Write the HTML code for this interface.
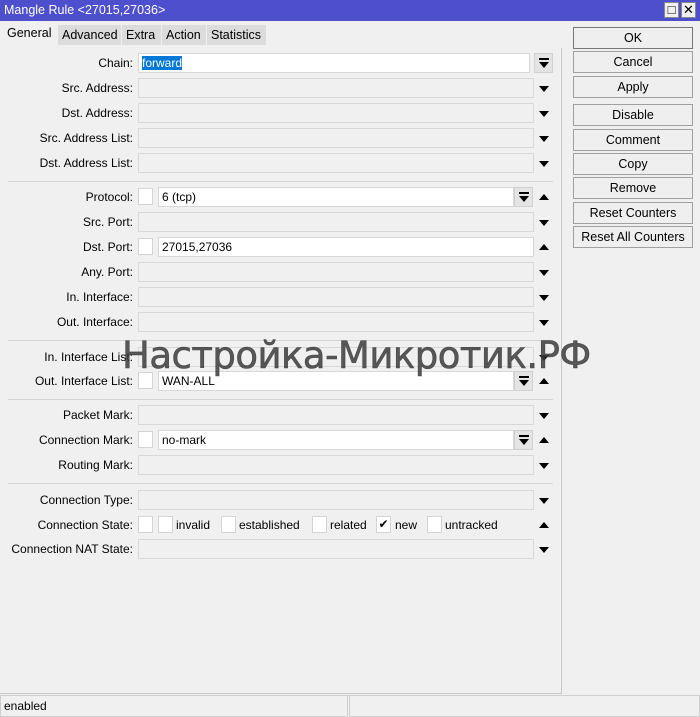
<!DOCTYPE html>
<html><head><meta charset="utf-8"><style>
*{box-sizing:border-box;margin:0;padding:0}
body{width:700px;height:717px;background:#f0f0f0;font-family:"Liberation Sans",Arial,sans-serif;font-size:12px;color:#000;position:relative;overflow:hidden}
.a{position:absolute}
.title{left:0;top:0;width:700px;height:21px;background:#4e4fcd;color:#fff;font-size:12.5px;padding:3px 0 0 4px}
.wb{top:2px;width:15px;height:16px;background:#f0f0f0;border:1px solid #888;color:#000;text-align:center;font-size:13px;line-height:14px}
.tab{top:25px;height:20px;background:#dcdcdc;padding:3px 4px 0 4px;font-size:12.5px;border-right:1px solid #f0f0f0}
.lbl{right:567px;text-align:right;white-space:nowrap;font-size:12px}
.fld{left:138px;width:396px;height:20px;background:#f0f0f0;border:1px solid #d8d8d8}
.wf{background:#fff;border:1px solid #d8d8d8;padding:2px 0 0 3px;font-size:12px}
.cb{width:15px;height:17px;background:#fff;border:1px solid #d4d4d4}
.dn{width:0;height:0;border-left:5px solid transparent;border-right:5px solid transparent;border-top:6px solid #000}
.up{width:0;height:0;border-left:5px solid transparent;border-right:5px solid transparent;border-bottom:6px solid #000}
.sep{left:8px;width:545px;height:1px;background:#d4d4d4}
.btn{left:573px;width:120px;height:22px;background:#efefef;border:1px solid #a0a0a0;text-align:center;line-height:20px;font-size:12.5px}
.dd{width:19px;height:20px;background:#e4e4e4;border:1px solid #d0d0d0}
.dd svg{position:absolute;left:4px;top:4px}
</style></head><body>
<div class="a title">Mangle Rule &lt;27015,27036&gt;</div>
<div class="a wb" style="left:664px">□</div>
<div class="a wb" style="left:681px">✕</div>

<div class="a tab" style="left:3px;top:23px;height:23px;background:#f0f0f0;width:55px">General</div>
<div class="a tab" style="left:58px;width:64px">Advanced</div>
<div class="a tab" style="left:122px;width:40px">Extra</div>
<div class="a tab" style="left:162px;width:45px">Action</div>
<div class="a tab" style="left:207px;width:60px">Statistics</div>

<div class="a" style="left:561px;top:48px;width:1px;height:646px;background:#c8c8c8"></div>
<div class="a" style="left:0;top:693px;width:562px;height:1px;background:#c8c8c8"></div>
<div class="a" style="left:0;top:695px;width:700px;height:1px;background:#d0d0d0"></div>
<div class="a" style="left:0;top:695px;width:348px;height:22px;border:1px solid #d0d0d0;padding:3px 0 0 3px">enabled</div>
<div class="a" style="left:349px;top:695px;width:351px;height:22px;border:1px solid #d0d0d0"></div>

<div class="a lbl" style="top:56px">Chain:</div>
<div class="a wf" style="left:138px;top:53px;width:392px;height:20px"><span style="background:#0078d7;color:#fff">forward</span></div>
<div class="a dd" style="left:534px;top:53px"><svg width="10" height="11"><rect x="0" y="0" width="10" height="2" fill="#000"/><path d="M0 4H10L5 10Z" fill="#000"/></svg></div>

<div class="a lbl" style="top:81px">Src. Address:</div><div class="a fld" style="top:78px"></div><div class="a dn" style="left:539px;top:86px"></div>
<div class="a lbl" style="top:106px">Dst. Address:</div><div class="a fld" style="top:103px"></div><div class="a dn" style="left:539px;top:111px"></div>
<div class="a lbl" style="top:131px">Src. Address List:</div><div class="a fld" style="top:128px"></div><div class="a dn" style="left:539px;top:136px"></div>
<div class="a lbl" style="top:156px">Dst. Address List:</div><div class="a fld" style="top:153px"></div><div class="a dn" style="left:539px;top:161px"></div>
<div class="a sep" style="top:181px"></div>

<div class="a lbl" style="top:190px">Protocol:</div>
<div class="a cb" style="left:138px;top:188px"></div>
<div class="a wf" style="left:158px;top:187px;width:356px;height:20px">6 (tcp)</div>
<div class="a dd" style="left:514px;top:187px"><svg width="10" height="11"><rect x="0" y="0" width="10" height="2" fill="#000"/><path d="M0 4H10L5 10Z" fill="#000"/></svg></div>
<div class="a up" style="left:539px;top:194px"></div>

<div class="a lbl" style="top:215px">Src. Port:</div><div class="a fld" style="top:212px"></div><div class="a dn" style="left:539px;top:220px"></div>
<div class="a lbl" style="top:240px">Dst. Port:</div>
<div class="a cb" style="left:138px;top:238px"></div>
<div class="a wf" style="left:158px;top:237px;width:376px;height:20px">27015,27036</div>
<div class="a up" style="left:539px;top:244px"></div>
<div class="a lbl" style="top:265px">Any. Port:</div><div class="a fld" style="top:262px"></div><div class="a dn" style="left:539px;top:270px"></div>
<div class="a lbl" style="top:290px">In. Interface:</div><div class="a fld" style="top:287px"></div><div class="a dn" style="left:539px;top:295px"></div>
<div class="a lbl" style="top:315px">Out. Interface:</div><div class="a fld" style="top:312px"></div><div class="a dn" style="left:539px;top:320px"></div>
<div class="a sep" style="top:340px"></div>

<div class="a lbl" style="top:350px">In. Interface List:</div><div class="a fld" style="top:347px"></div><div class="a dn" style="left:539px;top:355px"></div>
<div class="a lbl" style="top:374px">Out. Interface List:</div>
<div class="a cb" style="left:138px;top:372px"></div>
<div class="a wf" style="left:158px;top:371px;width:356px;height:20px">WAN-ALL</div>
<div class="a dd" style="left:514px;top:371px"><svg width="10" height="11"><rect x="0" y="0" width="10" height="2" fill="#000"/><path d="M0 4H10L5 10Z" fill="#000"/></svg></div>
<div class="a up" style="left:539px;top:378px"></div>
<div class="a sep" style="top:399px"></div>

<div class="a lbl" style="top:408px">Packet Mark:</div><div class="a fld" style="top:405px"></div><div class="a dn" style="left:539px;top:413px"></div>
<div class="a lbl" style="top:433px">Connection Mark:</div>
<div class="a cb" style="left:138px;top:431px"></div>
<div class="a wf" style="left:158px;top:430px;width:356px;height:20px">no-mark</div>
<div class="a dd" style="left:514px;top:430px"><svg width="10" height="11"><rect x="0" y="0" width="10" height="2" fill="#000"/><path d="M0 4H10L5 10Z" fill="#000"/></svg></div>
<div class="a up" style="left:539px;top:437px"></div>
<div class="a lbl" style="top:458px">Routing Mark:</div><div class="a fld" style="top:455px"></div><div class="a dn" style="left:539px;top:463px"></div>
<div class="a sep" style="top:483px"></div>

<div class="a lbl" style="top:493px">Connection Type:</div><div class="a fld" style="top:490px"></div><div class="a dn" style="left:539px;top:498px"></div>
<div class="a lbl" style="top:518px">Connection State:</div>
<div class="a cb" style="left:138px;top:516px"></div>
<div class="a cb" style="left:158px;top:516px"></div><div class="a" style="left:176px;top:518px">invalid</div>
<div class="a cb" style="left:221px;top:516px"></div><div class="a" style="left:239px;top:518px">established</div>
<div class="a cb" style="left:312px;top:516px"></div><div class="a" style="left:330px;top:518px">related</div>
<div class="a cb" style="left:376px;top:516px;font-size:12px;line-height:15px;text-align:center">✔</div><div class="a" style="left:395px;top:518px">new</div>
<div class="a cb" style="left:427px;top:516px"></div><div class="a" style="left:445px;top:518px">untracked</div>
<div class="a up" style="left:539px;top:522px"></div>
<div class="a lbl" style="top:542px">Connection NAT State:</div><div class="a fld" style="top:539px"></div><div class="a dn" style="left:539px;top:547px"></div>

<div class="a btn" style="top:27px;border-color:#777">OK</div>
<div class="a btn" style="top:51px">Cancel</div>
<div class="a btn" style="top:76px">Apply</div>
<div class="a btn" style="top:104px">Disable</div>
<div class="a btn" style="top:129px">Comment</div>
<div class="a btn" style="top:153px">Copy</div>
<div class="a btn" style="top:177px">Remove</div>
<div class="a btn" style="top:202px">Reset Counters</div>
<div class="a btn" style="top:226px">Reset All Counters</div>

<div class="a" style="left:122px;top:334px;font-size:37px;font-family:'DejaVu Sans',sans-serif;color:rgba(60,60,60,0.85);white-space:nowrap;letter-spacing:-0.5px;-webkit-text-stroke:0.6px rgba(60,60,60,0.85)">Настройка-Микротик.РФ</div>
</body></html>
